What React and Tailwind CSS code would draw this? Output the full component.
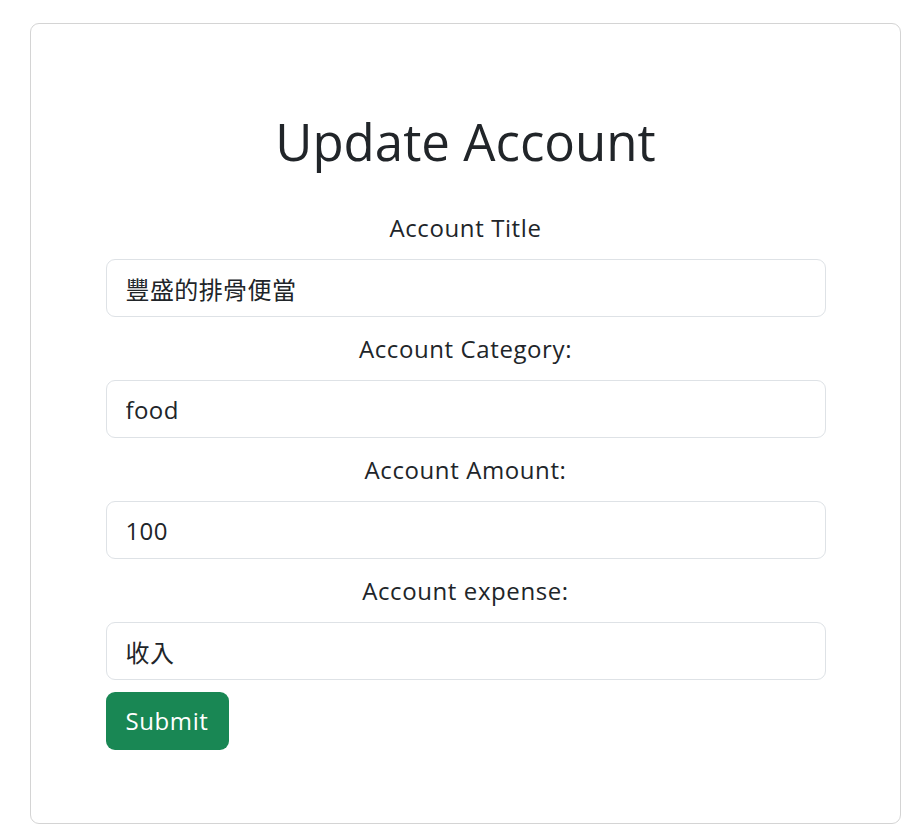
import React, { useState } from "react";

const fields = [
  { label: "Account Title", name: "title", value: "豐盛的排骨便當" },
  { label: "Account Category:", name: "category", value: "food" },
  { label: "Account Amount:", name: "amount", value: "100" },
  { label: "Account expense:", name: "expense", value: "收入" },
];

export default function App() {
  const [form, setForm] = useState(
    Object.fromEntries(fields.map((f) => [f.name, f.value]))
  );

  return (
    <div
      className="min-h-[824px] bg-white pt-[23px] px-[30px] text-[#212529]"
      style={{ fontFamily: '"Open Sans", "Noto Sans CJK TC", sans-serif' }}
    >
      <div className="w-[871px] h-[801px] rounded-[9px] border border-[#d4d4d4] pt-[84px]">
        <h1 className="text-center text-[51px] leading-[67px] font-normal mb-[35px]">
          Update Account
        </h1>
        <form
          className="w-[720px] mx-auto"
          onSubmit={(e) => e.preventDefault()}
        >
          {fields.map((f, i) => (
            <div key={f.name}>
              <label
                htmlFor={f.name}
                className={
                  "block text-center text-[24px] tracking-[0.6px] leading-[36px] mb-[13px] " +
                  (i === 0 ? "" : "mt-[14px]")
                }
              >
                {f.label}
              </label>
              <input
                id={f.name}
                value={form[f.name]}
                onChange={(e) => setForm({ ...form, [f.name]: e.target.value })}
                className="block w-full h-[58px] px-[19px] text-[24px] tracking-[0.4px] border border-[#dee2e6] rounded-[9px] outline-none"
              />
            </div>
          ))}
          <button
            type="submit"
            className="mt-[12px] h-[58px] px-[20px] text-[24px] tracking-[0.6px] text-white bg-[#198754] rounded-[9px]"
          >
            Submit
          </button>
        </form>
      </div>
    </div>
  );
}
